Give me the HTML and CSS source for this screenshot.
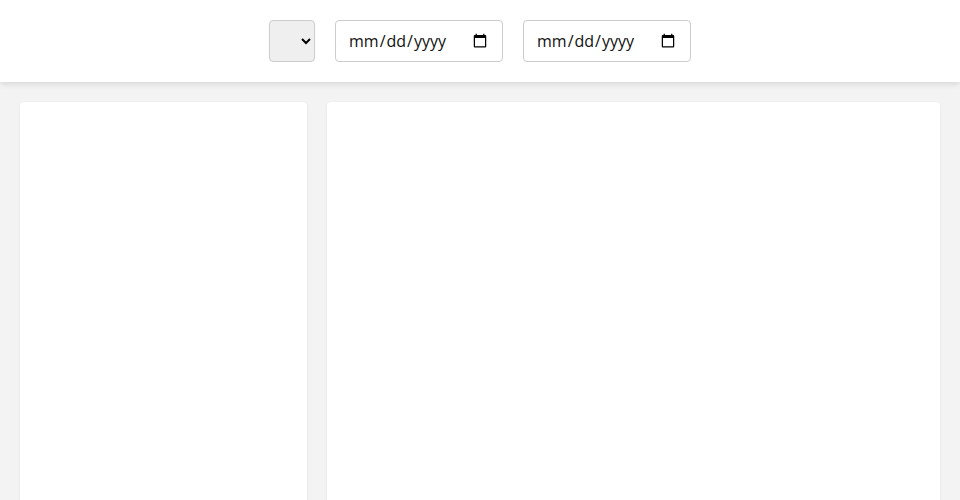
FILE: index.html
```html
<!DOCTYPE html>
<html>
<head>
<meta charset="utf-8">
<link rel="stylesheet" href="styles.css">
</head>
<body>
<header class="toolbar">
  <select class="picker"><option></option></select>
  <input class="date" type="date">
  <input class="date" type="date">
</header>
<main class="content">
  <section class="card"></section>
  <section class="card"></section>
</main>
</body>
</html>
```
FILE: styles.css
```css
html, body {
  margin: 0;
  padding: 0;
  background: #f3f3f3;
  font-family: "Open Sans", "Liberation Sans", sans-serif;
}
.toolbar {
  height: 82px;
  background: #ffffff;
  display: flex;
  align-items: center;
  justify-content: center;
  gap: 20px;
  box-shadow: 0 2px 6px rgba(0, 0, 0, 0.12);
  position: relative;
  z-index: 1;
}
.picker {
  width: 46px;
  height: 42px;
  box-sizing: border-box;
  border: 1px solid #cccccc;
  border-radius: 4px;
  background: #efefef;
  font-family: inherit;
  font-size: 16px;
}
.date {
  width: 168px;
  height: 42px;
  box-sizing: border-box;
  border: 1px solid #cccccc;
  border-radius: 4px;
  background: #ffffff;
  padding: 0 12px;
  font-family: inherit;
  font-size: 16px;
  color: #111;
}
.content {
  display: grid;
  grid-template-columns: 287px 1fr;
  gap: 20px;
  padding: 20px;
}
.card {
  background: #ffffff;
  border-radius: 4px;
  height: 480px;
  box-shadow: 0 1px 3px rgba(0, 0, 0, 0.08);
}
```
